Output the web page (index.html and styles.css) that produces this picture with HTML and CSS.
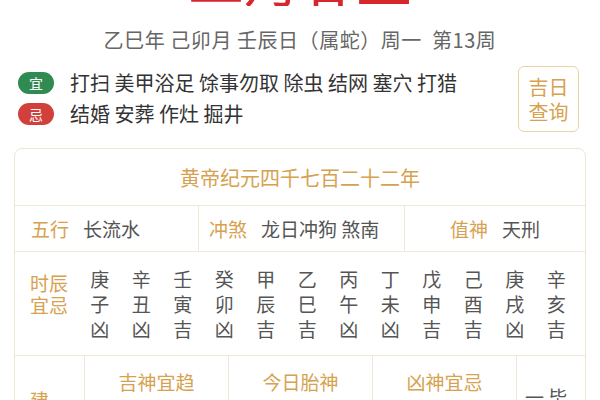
FILE: index.html
```html
<!DOCTYPE html>
<html lang="zh">
<head>
<meta charset="utf-8">
<link rel="stylesheet" href="styles.css">
</head>
<body>
<div class="title-clip"><div class="title">二月廿五</div></div>
<div class="sub">乙巳年 己卯月 壬辰日（属蛇）周一 &nbsp;第13周</div>
<div class="yiji">
  <div class="yj-list">
    <div class="yj-row"><span class="pill yi">宜</span><span class="yj-text">打扫 美甲浴足 馀事勿取 除虫 结网 塞穴 打猎</span></div>
    <div class="yj-row"><span class="pill ji">忌</span><span class="yj-text">结婚 安葬 作灶 掘井</span></div>
  </div>
  <div class="query"><span>吉日</span><span>查询</span></div>
</div>
<div class="card">
  <div class="card-head">黄帝纪元四千七百二十二年</div>
  <div class="info-row">
    <div class="cell c1"><span class="lbl">五行</span><span class="val">长流水</span></div>
    <div class="cell c2"><span class="lbl">冲煞</span><span class="val">龙日冲狗 煞南</span></div>
    <div class="cell c3"><span class="lbl">值神</span><span class="val">天刑</span></div>
  </div>
  <div class="hours">
    <div class="hours-lbl"><span>时辰</span><span>宜忌</span></div>
    <div class="hours-grid">
      <div class="hr">庚<br>子<br>凶</div>
      <div class="hr">辛<br>丑<br>凶</div>
      <div class="hr">壬<br>寅<br>吉</div>
      <div class="hr">癸<br>卯<br>凶</div>
      <div class="hr">甲<br>辰<br>吉</div>
      <div class="hr">乙<br>巳<br>吉</div>
      <div class="hr">丙<br>午<br>凶</div>
      <div class="hr">丁<br>未<br>凶</div>
      <div class="hr">戊<br>申<br>吉</div>
      <div class="hr">己<br>酉<br>吉</div>
      <div class="hr">庚<br>戌<br>凶</div>
      <div class="hr">辛<br>亥<br>吉</div>
    </div>
  </div>
  <div class="gods">
    <div class="g g1"><span class="g1-lbl">建</span></div>
    <div class="g gm"><div class="g-head">吉神宜趋</div></div>
    <div class="g gm"><div class="g-head">今日胎神</div></div>
    <div class="g gm"><div class="g-head">凶神宜忌</div></div>
    <div class="g g5"><span class="g5-txt">一 毕</span></div>
  </div>
</div>
</body>
</html>
```
FILE: styles.css
```css
* { box-sizing: border-box; }
html, body { margin: 0; padding: 0; background: #fff; overflow: hidden; }
body {
  width: 600px;
  height: 400px;
  font-family: "Noto Sans CJK SC", "Noto Sans", sans-serif;
  color: #555;
}
.title-clip {
  height: 6px;
  overflow: hidden;
  display: flex;
  justify-content: center;
  align-items: flex-end;
}
.title {
  font-size: 56px;
  line-height: 1;
  color: #d8262d;
  font-weight: 400;
  white-space: nowrap;
}
.sub {
  margin-top: 20px;
  text-align: center;
  font-size: 20px;
  line-height: 28px;
  letter-spacing: 0.55px;
  color: #666;
  white-space: nowrap;
}
.yiji {
  display: flex;
  align-items: flex-start;
  margin-top: 12px;
  padding: 0 21px 0 18px;
}
.yj-list {
  flex: 1;
  padding-top: 1px;
}
.yj-row {
  display: flex;
  align-items: center;
  height: 31px;
  gap: 16px;
}
.pill {
  width: 36px;
  height: 22px;
  border-radius: 11px;
  color: #fff;
  font-size: 14px;
  line-height: 22px;
  text-align: center;
}
.pill.yi { background: #2f8b52; }
.pill.ji { background: #d2403b; }
.yj-text {
  font-size: 20px;
  color: #333;
  white-space: nowrap;
}
.query {
  width: 61px;
  height: 66px;
  border: 1.5px solid #ecd39f;
  border-radius: 6px;
  color: #d6a24f;
  font-size: 20px;
  line-height: 25px;
  display: flex;
  flex-direction: column;
  align-items: center;
  justify-content: center;
}
.card {
  margin: 16px 14px 0;
  border: 1px solid #efe6d2;
  border-radius: 8px;
}
.card-head {
  height: 57px;
  display: flex;
  align-items: center;
  justify-content: center;
  font-size: 20px;
  color: #d6a24f;
  border-bottom: 1px solid #f0e8d6;
}
.info-row {
  display: flex;
  height: 46px;
  border-bottom: 1px solid #f0e8d6;
}
.cell {
  display: flex;
  align-items: center;
  gap: 14px;
  font-size: 19px;
  white-space: nowrap;
}
.c1 { width: 184px; padding-left: 16px; border-right: 1px solid #f0e8d6; }
.c2 { width: 206px; padding-left: 10px; border-right: 1px solid #f0e8d6; }
.c3 { flex: 1; justify-content: center; }
.lbl { color: #d6a24f; }
.val { color: #555; }
.hours {
  display: flex;
  align-items: flex-start;
  height: 104px;
  border-bottom: 1px solid #f0e8d6;
}
.hours-lbl {
  width: 64px;
  padding: 20px 0 0 15px;
  display: flex;
  flex-direction: column;
  font-size: 19px;
  line-height: 22px;
  color: #d6a24f;
}
.hours-grid {
  flex: 1;
  display: grid;
  grid-template-columns: repeat(12, 1fr);
  padding: 14px 8px 0 0;
}
.hr {
  text-align: center;
  font-size: 19px;
  line-height: 25px;
  color: #555;
}
.gods {
  display: flex;
  height: 80px;
}
.g { border-right: 1px solid #f0e8d6; }
.g1 { width: 70px; padding: 30px 0 0 15px; }
.g1-lbl { color: #d6a24f; font-size: 19px; }
.gm { width: 144px; }
.g-head {
  text-align: center;
  padding-top: 14px;
  font-size: 19px;
  line-height: 24px;
  color: #d6a24f;
}
.g5 { flex: 1; border-right: none; padding: 27px 0 0 8px; }
.g5-txt { font-size: 19px; color: #555; white-space: nowrap; }
```
